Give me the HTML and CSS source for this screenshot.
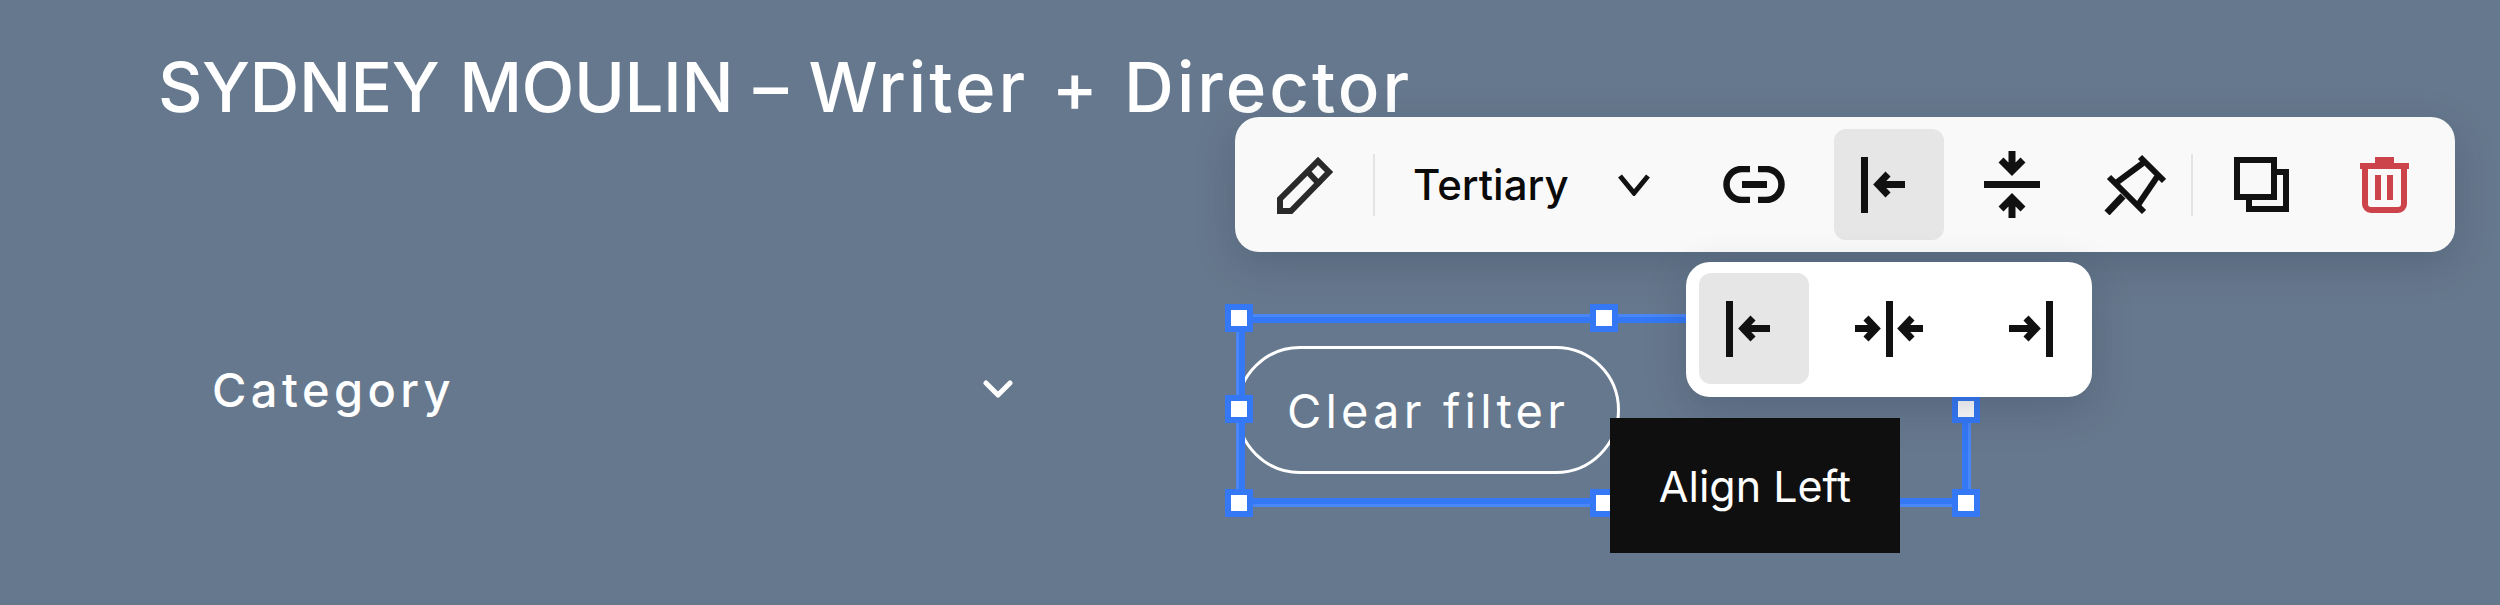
FILE: index.html
```html
<!DOCTYPE html>
<html lang="en">
<head>
    <meta charset="UTF-8">
    <title>Button toolbar</title>
    <link rel="stylesheet" href="styles.css">
</head>
<body>
    <div class="page">
        <h1><span class="title-name">SYDNEY MOULIN</span> – <span class="title-role">Writer + Director</span></h1>

        <div class="filters">
            <div class="dropdown">
                <span>Category</span>
                <svg class="dropdown-chevron" viewBox="0 0 30 18" fill="none" stroke="currentColor" stroke-width="5" stroke-linecap="round" stroke-linejoin="round">
                    <path d="M3 3l12 12L27 3" />
                </svg>
            </div>

            <div class="selection">
                <a class="pill">Clear filter</a>
                <span class="handle handle-tl"></span>
                <span class="handle handle-tc"></span>
                <span class="handle handle-tr"></span>
                <span class="handle handle-ml"></span>
                <span class="handle handle-mr"></span>
                <span class="handle handle-bl"></span>
                <span class="handle handle-bc"></span>
                <span class="handle handle-br"></span>
            </div>
        </div>
    </div>

    <!-- Floating editor toolbar -->
    <div class="toolbar">
        <button class="tool">
            <svg width="58" height="58" viewBox="0 0 58 58" fill="none" stroke="#2a2a2a" stroke-width="6">
                <path d="M4 55V43L42 5 53 16 15 55z" />
                <path d="M31 15l13 14" />
            </svg>
        </button>
        <span class="divider"></span>
        <div class="style-select">
            <span>Tertiary</span>
            <svg width="32" height="23" viewBox="0 0 32 23" fill="none" stroke="#111" stroke-width="5">
                <path d="M2 3l14 17L30 3" />
            </svg>
        </div>
        <button class="tool">
            <svg width="62" height="37" viewBox="0 0 62 37" fill="none" stroke="#111" stroke-width="6.5">
                <path d="M27 3H19a15.500 15.500 0 0 0 0 31h8" />
                <path d="M35 3h8a15.500 15.500 0 0 1 0 31h-8" />
                <path d="M19 18.500h25" stroke-width="7" />
            </svg>
        </button>
        <button class="tool tool-active tool-spaced">
            <svg width="56" height="56" viewBox="0 0 56 56" fill="none" stroke="#111" stroke-width="7">
                <path d="M3.500 0v56" />
                <path d="M44 27.500H18M27 17L17 27.500 27 38" />
            </svg>
        </button>
        <button class="tool">
            <svg width="56" height="67" viewBox="0 0 56 67" fill="none" stroke="#111" stroke-width="7">
                <path d="M0 33.500h56" />
                <path d="M28 0v19M17 9l11 11 11-11" />
                <path d="M28 67V48M17 58l11-11 11 11" />
            </svg>
        </button>
        <button class="tool">
            <svg width="62" height="61" viewBox="0 0 62 61" fill="none" stroke="#111" stroke-width="6">
                <path d="M36 3l24 24" />
                <path d="M5 23l35 35" />
                <path d="M39 9L12 29" />
                <path d="M53 23L34 51" />
                <path d="M19 42L3 59" stroke-width="7" />
            </svg>
        </button>
        <span class="divider divider-tight"></span>
        <button class="tool">
            <svg width="55" height="55" viewBox="0 0 55 55" fill="none" stroke="#111" stroke-width="6">
                <path d="M3 3h37v37H3z" />
                <path d="M43 15h9v37H15v-9" />
            </svg>
        </button>
        <button class="tool">
            <svg width="49" height="56" viewBox="0 0 49 56" fill="none" stroke="#cc4449" stroke-width="6">
                <path d="M15 3h19" />
                <path d="M0 9h49" />
                <path d="M5 9v38a6 6 0 0 0 6 6h27a6 6 0 0 0 6-6V9" />
                <path d="M18 18v25M30 18v25" />
            </svg>
        </button>
    </div>

    <!-- Alignment options -->
    <div class="popover">
        <button class="tool tool-active">
            <svg width="56" height="56" viewBox="0 0 56 56" fill="none" stroke="#111" stroke-width="7">
                <path d="M3.500 0v56" />
                <path d="M44 27.500H18M27 17L17 27.500 27 38" />
            </svg>
        </button>
        <button class="tool">
            <svg width="68" height="56" viewBox="0 0 68 56" fill="none" stroke="#111" stroke-width="7">
                <path d="M34.500 0v56" />
                <path d="M0 27.500h20M11 17l10 10.500L11 38" />
                <path d="M68 27.500H48M57 17L47 27.500 57 38" />
            </svg>
        </button>
        <button class="tool">
            <svg width="58" height="56" viewBox="0 0 58 56" fill="none" stroke="#111" stroke-width="7">
                <path d="M54.500 0v56" />
                <path d="M14 27.500h26M31 17l10 10.500L31 38" />
            </svg>
        </button>
    </div>

    <div class="tooltip">Align Left</div>
</body>
</html>
```

FILE: styles.css
```css
* {
    margin: 0;
    padding: 0;
    box-sizing: border-box;
}

html, body {
    width: 2500px;
    height: 605px;
    overflow: hidden;
}

body {
    position: relative;
    background: #66788d;
    color: #fff;
    font-family: 'Inter', sans-serif;
}

.page {
    padding: 37px 0 0 158px;
}

h1 {
    font-size: 69px;
    font-weight: 500;
    line-height: 100px;
    word-spacing: 2px;
}

.title-name {
    letter-spacing: -0.5px;
}

.title-role {
    letter-spacing: 3px;
}

.filters {
    display: flex;
    align-items: flex-start;
    margin-top: 180px;
    padding-left: 54px;
}

.dropdown {
    display: flex;
    align-items: center;
    justify-content: space-between;
    width: 801px;
    height: 100px;
    margin-top: 22px;
    font-size: 47px;
    font-weight: 500;
    letter-spacing: 4.4px;
}

.dropdown-chevron {
    width: 30px;
    height: 18px;
}

.selection {
    position: relative;
    width: 729px;
    height: 187px;
    margin-left: 226px;
    padding-top: 29px;
}

/* frame is drawn over the button, handles over the frame */
.selection::before {
    content: '';
    position: absolute;
    inset: 0;
    border: 6px solid #3478f6;
    box-shadow: 0 0 0 3px #4a86f5;
}

.pill {
    display: flex;
    align-items: center;
    justify-content: center;
    width: 384px;
    height: 128px;
    margin-left: -3px;
    border: 3px solid #fff;
    border-radius: 64px;
    font-size: 47px;
    letter-spacing: 4.2px;
}

.handle {
    position: absolute;
    width: 28px;
    height: 28px;
    background: #fff;
    border: 6px solid #3478f6;
}

.handle-tl { left: -14px; top: -13px; }
.handle-tc { left: 351px; top: -13px; }
.handle-tr { left: 713px; top: -13px; }
.handle-ml { left: -14px; top: 78px; }
.handle-mr { left: 713px; top: 78px; }
.handle-bl { left: -14px; top: 172px; }
.handle-bc { left: 351px; top: 172px; }
.handle-br { left: 713px; top: 172px; }

.toolbar {
    position: absolute;
    left: 1235px;
    top: 117px;
    display: flex;
    align-items: center;
    width: 1220px;
    height: 135px;
    padding-left: 15px;
    background: #f9f9f9;
    border-radius: 24px;
    box-shadow: 0 12px 40px rgba(30, 45, 70, 0.22);
}

.tool {
    display: flex;
    align-items: center;
    justify-content: center;
    flex: none;
    width: 110px;
    height: 111px;
    background: none;
    border: none;
    border-radius: 12px;
}

.tool-active {
    background: #e6e6e6;
}

.toolbar .tool {
    margin-left: 13px;
}

.toolbar .tool:first-child {
    margin-left: 0;
}

.toolbar .tool-spaced {
    margin-left: 25px;
}

.tool svg {
    display: block;
}

.divider {
    flex: none;
    width: 2px;
    height: 62px;
    margin-left: 13px;
    background: #e4e4e4;
}

.divider-tight {
    margin-left: 1px;
}

.style-select {
    display: flex;
    align-items: center;
    flex: none;
    width: 311px;
    padding-left: 38px;
    color: #0a0a0a;
    font-size: 42px;
    font-weight: 500;
}

.style-select span {
    width: 205px;
}

.popover {
    position: absolute;
    left: 1686px;
    top: 262px;
    display: flex;
    gap: 25px;
    width: 406px;
    height: 135px;
    padding: 11px 13px 13px;
    background: #fff;
    border-radius: 24px;
    box-shadow: 0 12px 40px rgba(30, 45, 70, 0.22);
}

.tooltip {
    position: absolute;
    left: 1610px;
    top: 418px;
    display: flex;
    align-items: center;
    justify-content: center;
    width: 290px;
    height: 135px;
    background: #0f0f0f;
    font-size: 43px;
}
```
